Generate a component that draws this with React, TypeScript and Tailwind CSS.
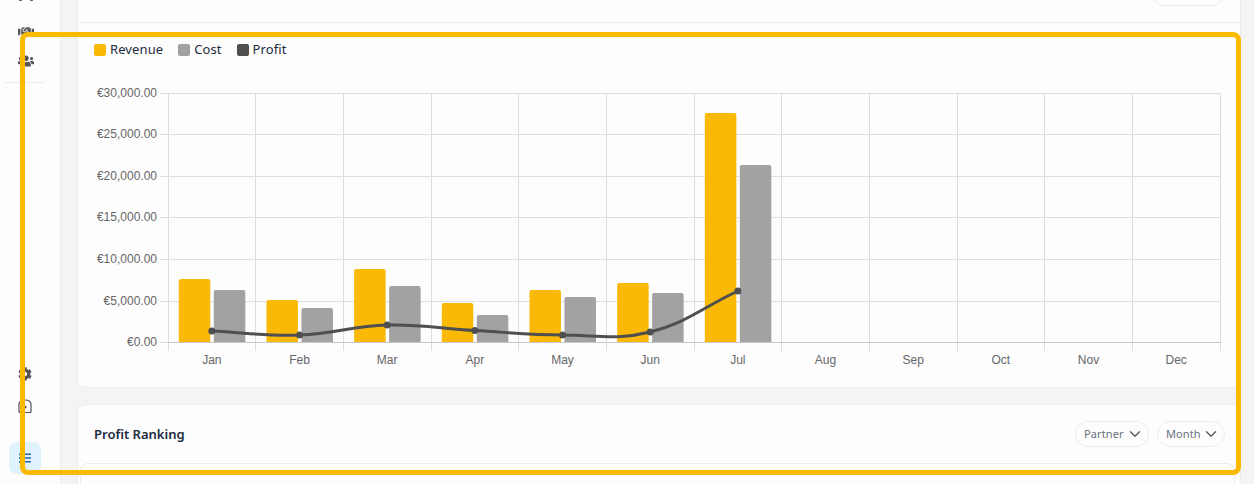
import { ChevronDown } from 'lucide-react'
import { FaCar, FaCog, FaHandshake, FaListUl, FaUsers } from 'react-icons/fa'

const months = ['Jan', 'Feb', 'Mar', 'Apr', 'May', 'Jun', 'Jul', 'Aug', 'Sep', 'Oct', 'Nov', 'Dec']
const yTicks = [
  { label: '€30,000.00', y: 93.5 },
  { label: '€25,000.00', y: 134.5 },
  { label: '€20,000.00', y: 176.5 },
  { label: '€15,000.00', y: 217.5 },
  { label: '€10,000.00', y: 259.5 },
  { label: '€5,000.00', y: 301.5 },
  { label: '€0.00', y: 342.5 },
]
// top of each bar in px, baseline is 342
const revenue = [279, 300, 269, 303, 290, 283, 113]
const cost = [290, 308, 286, 315, 297, 293, 165]
const profit = [331, 335, 325, 330.5, 335, 332, 291]

const plotLeft = 168
const colWidth = 87.67

function Bar({ x, top, color }: { x: number; top: number; color: string }) {
  return <path d={`M${x} 342V${top + 2}q0-2 2-2h27.5q2 0 2 2V342z`} fill={color} />
}

// same spline as chart.js with tension 0.4
function controlPoints(pts: number[][], i: number) {
  const cur = pts[i]
  const prev = pts[i - 1] ?? cur
  const next = pts[i + 1] ?? cur
  const d01 = Math.hypot(cur[0] - prev[0], cur[1] - prev[1])
  const d12 = Math.hypot(next[0] - cur[0], next[1] - cur[1])
  const total = d01 + d12
  const fa = 0.4 * (d01 / total)
  const fb = 0.4 * (d12 / total)
  return {
    before: [cur[0] - fa * (next[0] - prev[0]), cur[1] - fa * (next[1] - prev[1])],
    after: [cur[0] + fb * (next[0] - prev[0]), cur[1] + fb * (next[1] - prev[1])],
  }
}

function RevenueChart() {
  const pts = profit.map((y, i) => [plotLeft + colWidth * (i + 0.5), y])
  const line = pts.reduce((d, [x, y], i) => {
    if (i === 0) return `M${x} ${y}`
    const c1 = controlPoints(pts, i - 1).after
    const c2 = controlPoints(pts, i).before
    return `${d}C${c1[0]} ${c1[1]} ${c2[0]} ${c2[1]} ${x} ${y}`
  }, '')

  return (
    <svg width="1163" height="320" viewBox="78 50 1163 320" className="block">
      {[...months, ''].map((_, i) => (
        <path key={i} d={`M${Math.floor(plotLeft + colWidth * i) + 0.5} 93V351`} stroke="#dcdcdc" fill="none" />
      ))}
      {yTicks.map(t => (
        <g key={t.label}>
          <path d={`M160 ${t.y}H1221`} stroke="#dedede" fill="none" />
          <text x="157" y={t.y + 3.5} textAnchor="end" fontSize="12" fill="#666" fontFamily="'Liberation Sans', Arial, sans-serif">{t.label}</text>
        </g>
      ))}
      <path d="M168 342.5H1221" stroke="#c8c8c8" fill="none" />
      {revenue.map((top, i) => (
        <Bar key={i} x={plotLeft + colWidth * i + 10.8} top={top} color="#f9b906" />
      ))}
      {cost.map((top, i) => (
        <Bar key={i} x={plotLeft + colWidth * i + 45.8} top={top} color="#a2a2a2" />
      ))}
      <path d={line} stroke="#4f4f4f" strokeWidth="3" fill="none" />
      {pts.map(([x, y], i) => (
        <circle key={i} cx={x} cy={y} r="3.5" fill="#4f4f4f" />
      ))}
      {months.map((m, i) => (
        <text key={m} x={plotLeft + colWidth * (i + 0.5)} y="364" textAnchor="middle" fontSize="12" fill="#666" fontFamily="'Liberation Sans', Arial, sans-serif">{m}</text>
      ))}
    </svg>
  )
}

function LegendItem({ color, label }: { color: string; label: string }) {
  return (
    <div className="flex items-center gap-1">
      <span className={`w-3 h-3 rounded-[2px] ${color}`} />
      <span className="text-[13px] leading-none tracking-[0.1px] text-[#1c2b3f]">{label}</span>
    </div>
  )
}

function Pill({ label, className }: { label: string; className: string }) {
  return (
    <div className={`h-[26px] flex items-center justify-between pl-2 pr-1 rounded-full border border-[#ececec] text-[11px] tracking-[0.1px] text-[#69727f] ${className}`}>
      {label}
      <ChevronDown className="w-[18px] h-[18px] text-[#555]" strokeWidth={1.75} />
    </div>
  )
}

function SafeIcon() {
  return (
    <svg viewBox="0 0 14 14" className="w-[14px] h-[14px]" fill="none" stroke="currentColor">
      <path d="M1 12.5V5.5Q1 1 7 1T13 5.5V12.5Q13 13.5 12 13.5H2Q1 13.5 1 12.5Z" strokeWidth="1.2" />
      <circle cx="7" cy="8" r="1.6" fill="currentColor" stroke="none" />
    </svg>
  )
}

export default function App() {
  return (
    <div className="relative w-[1254px] h-[484px] overflow-hidden flex bg-[#f4f4f4] font-['Noto_Sans',sans-serif]">
      <aside className="w-[61px] shrink-0 h-full bg-[#fdfdfd] border-r border-[#ececec] flex flex-col items-start text-[#555]">
        <div className="-mt-[13px] ml-[18px] h-4 flex items-center"><FaCar className="w-4 h-4" /></div>
        <div className="mt-[21px] ml-[18px] h-4 flex items-center"><FaHandshake className="w-4 h-4" /></div>
        <div className="mt-[13px] ml-[18px] h-4 flex items-center"><FaUsers className="w-4 h-4" /></div>
        <div className="mt-[13px] ml-[5px] w-[39px] border-t border-[#ececec]" />
        <div className="mt-auto ml-[18px] h-4 flex items-center"><FaCog className="w-[14px] h-[14px]" /></div>
        <div className="mt-[16px] ml-[18px] h-4 flex items-center"><SafeIcon /></div>
        <div className="mt-[28px] mb-[10px] ml-[9px] w-8 h-8 rounded-lg bg-[#e0f3fd] flex items-center justify-center text-[#2a64a8]">
          <FaListUl className="w-3 h-3" />
        </div>
      </aside>

      <main className="ml-4 w-[1164px] shrink-0 flex flex-col gap-4">
        <section className="h-[388px] shrink-0 bg-[#fdfdfd] border-x border-b border-[#ececec] rounded-b-lg">
          <div className="h-[23px] border-b border-[#ececec] flex justify-end pr-4">
            <div className="-mt-4 w-[72px] h-[22px] rounded-full border border-[#ececec]" />
          </div>
          <div className="pl-4 pt-[20px] flex gap-[15px]">
            <LegendItem color="bg-[#f9b906]" label="Revenue" />
            <LegendItem color="bg-[#a2a2a2]" label="Cost" />
            <LegendItem color="bg-[#4f4f4f]" label="Profit" />
          </div>
          <div className="-mt-[6px]">
            <RevenueChart />
          </div>
        </section>

        <section className="flex-1 bg-[#fdfdfd] border-x border-t border-[#ececec] rounded-t-lg pl-[2px] pr-[5px]">
          <div className="h-[58px] flex items-center justify-between pl-[14px] pr-[10px]">
            <h2 className="pt-[2px] text-[13px] font-semibold text-[#1c2b3f]">Profit Ranking</h2>
            <div className="flex gap-2">
              <Pill label="Partner" className="w-[74px]" />
              <Pill label="Month" className="w-[68px]" />
            </div>
          </div>
          <div className="h-10 border border-[#ececec] rounded-t-lg" />
        </section>
      </main>

      <div className="absolute left-[20px] top-[32px] w-[1221px] h-[443px] border-[5px] border-[#fbba00] rounded-lg" />
    </div>
  )
}
